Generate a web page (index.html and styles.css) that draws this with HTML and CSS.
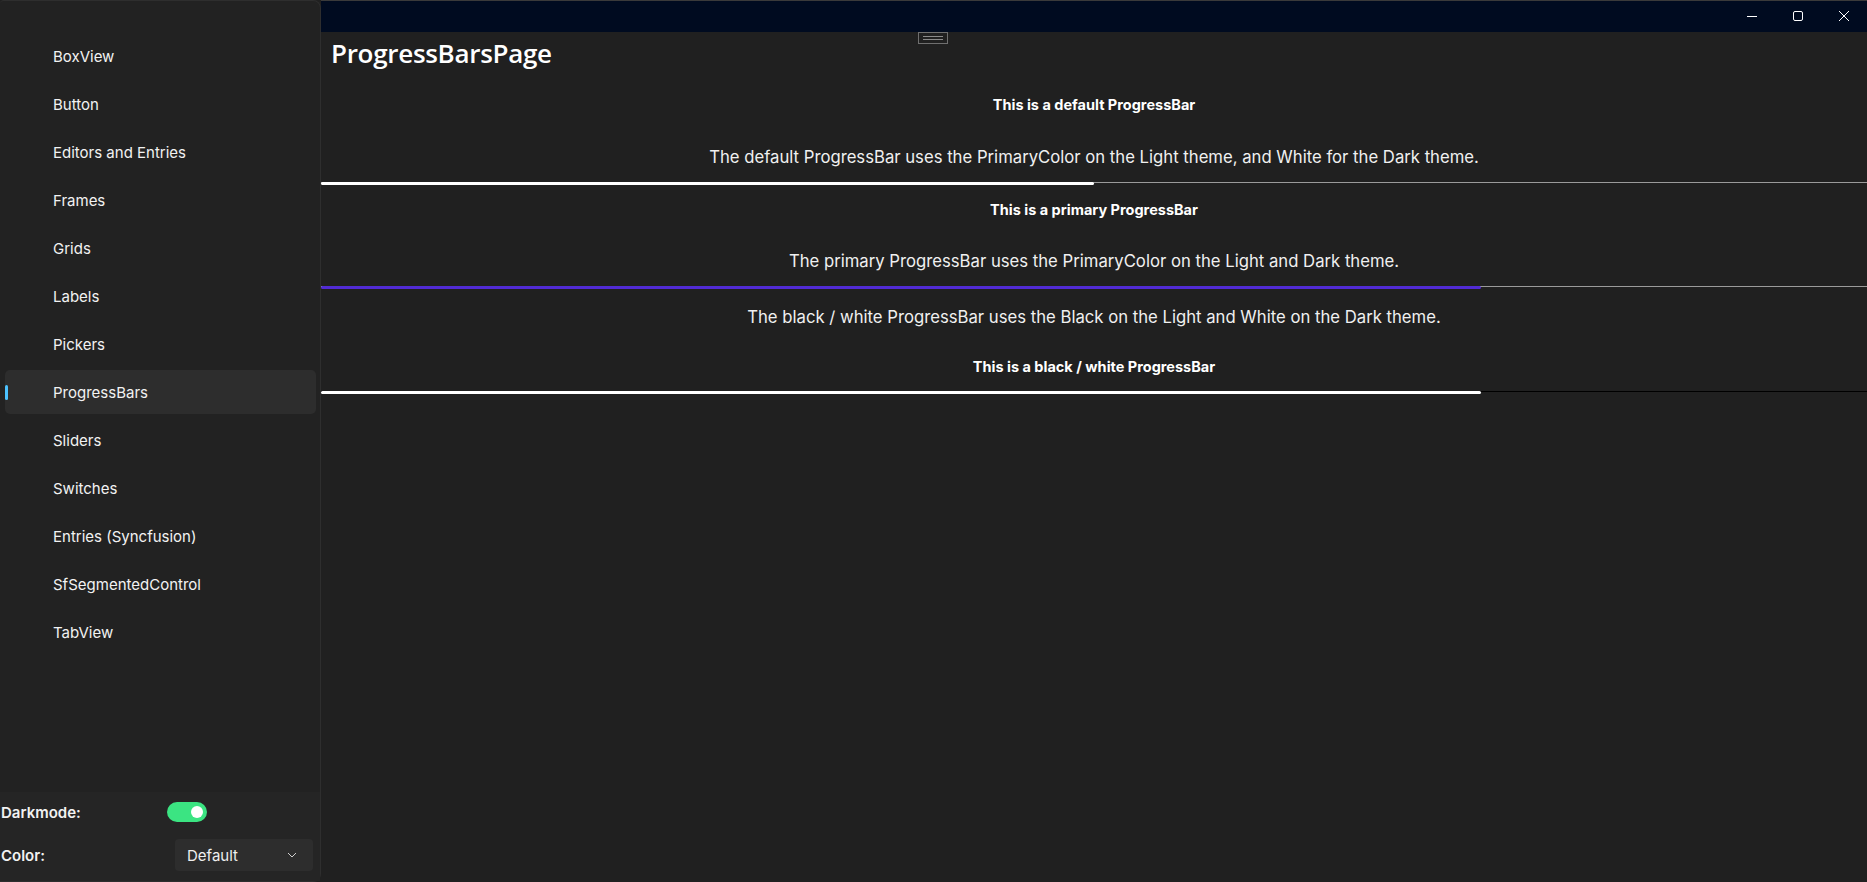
FILE: index.html
```html
<!DOCTYPE html>
<html lang="en">
<head>
<meta charset="utf-8">
<title>ProgressBarsPage</title>
<link rel="stylesheet" href="styles.css">
</head>
<body>
<div class="window">
  <aside class="flyout">
    <nav class="nav">
      <div class="nav-item">BoxView</div>
      <div class="nav-item">Button</div>
      <div class="nav-item">Editors and Entries</div>
      <div class="nav-item">Frames</div>
      <div class="nav-item">Grids</div>
      <div class="nav-item">Labels</div>
      <div class="nav-item">Pickers</div>
      <div class="nav-item selected">ProgressBars</div>
      <div class="nav-item">Sliders</div>
      <div class="nav-item">Switches</div>
      <div class="nav-item">Entries (Syncfusion)</div>
      <div class="nav-item">SfSegmentedControl</div>
      <div class="nav-item">TabView</div>
    </nav>
    <div class="settings">
      <div class="setting-row row-dark">
        <span class="setting-label">Darkmode:</span>
        <span class="toggle"><span class="knob"></span></span>
      </div>
      <div class="setting-row row-color">
        <span class="setting-label">Color:</span>
        <span class="dropdown">Default
          <svg class="chev" width="10" height="6" viewBox="0 0 10 6"><path d="M1 1 L5 5 L9 1" fill="none" stroke="#cfcfcf" stroke-width="1"/></svg>
        </span>
      </div>
    </div>
  </aside>
  <main class="main">
    <header class="titlebar">
      <div class="grip"><span></span><span></span></div>
      <div class="controls">
        <div class="ctl"><svg width="10" height="10" viewBox="0 0 10 10"><path d="M0 5.5 H10" stroke="#fff" stroke-width="1"/></svg></div>
        <div class="ctl"><svg width="10" height="10" viewBox="0 0 10 10"><rect x="0.5" y="0.5" width="9" height="9" rx="1.5" fill="none" stroke="#fff" stroke-width="1"/></svg></div>
        <div class="ctl"><svg width="10" height="10" viewBox="0 0 10 10"><path d="M0 0 L10 10 M10 0 L0 10" stroke="#fff" stroke-width="1"/></svg></div>
      </div>
    </header>
    <section class="content">
      <h1 class="page-title">ProgressBarsPage</h1>
      <p class="label-bold l1">This is a default ProgressBar</p>
      <p class="label d1">The default ProgressBar uses the PrimaryColor on the Light theme, and White for the Dark theme.</p>
      <div class="bar bar-default"><div class="fill" style="width:50%"></div></div>
      <p class="label-bold l2">This is a primary ProgressBar</p>
      <p class="label d2">The primary ProgressBar uses the PrimaryColor on the Light and Dark theme.</p>
      <div class="bar bar-primary"><div class="fill" style="width:75%"></div></div>
      <p class="label d3">The black / white ProgressBar uses the Black on the Light and White on the Dark theme.</p>
      <p class="label-bold l3">This is a black / white ProgressBar</p>
      <div class="bar bar-bw"><div class="fill" style="width:75%"></div></div>
    </section>
  </main>
</div>
</body>
</html>
```
FILE: styles.css
```css
* { box-sizing: border-box; }
html, body { margin: 0; padding: 0; }
body {
  width: 1867px;
  height: 882px;
  overflow: hidden;
  background: #202020;
  color: #ffffff;
  font-family: "Inter", "Noto Sans", sans-serif;
}
.window {
  display: flex;
  width: 1867px;
  height: 882px;
}
.flyout {
  width: 321px;
  flex: none;
  height: 882px;
  background: #222222;
  border: 1px solid #2e2e2e;
  border-left: none;
  border-radius: 4px 8px 8px 0;
  display: flex;
  flex-direction: column;
}
.nav {
  padding-top: 33px;
  flex: 1;
  display: flex;
  flex-direction: column;
  gap: 4px;
}
.nav-item {
  position: relative;
  height: 44px;
  margin-left: 5px;
  width: 311px;
  padding-left: 48px;
  display: flex;
  align-items: center;
  font-size: 15px;
  color: #f2f2f2;
  border-radius: 5px;
}
.nav-item.selected {
  background: #2d2d2d;
}
.nav-item.selected::before {
  content: "";
  position: absolute;
  left: 0;
  top: 15px;
  width: 3px;
  height: 15px;
  border-radius: 2px;
  background: #4cc2ff;
}
.settings {
  height: 89px;
  background: #252525;
  display: flex;
  flex-direction: column;
}
.setting-row {
  display: flex;
  align-items: center;
  padding-left: 1px;
}
.row-dark { height: 40px; }
.row-color { height: 46px; }
.setting-label {
  width: 166px;
  font-size: 15px;
  font-weight: 600;
  color: #f2f2f2;
}
.toggle {
  width: 40px;
  height: 20px;
  border-radius: 10px;
  background: #3be482;
  position: relative;
}
.knob {
  position: absolute;
  right: 4px;
  top: 4px;
  width: 12px;
  height: 12px;
  border-radius: 50%;
  background: #ffffff;
}
.row-color .setting-label { width: 174px; }
.dropdown {
  width: 138px;
  height: 32px;
  border-radius: 4px;
  background: #2d2d2d;
  display: flex;
  align-items: center;
  justify-content: space-between;
  padding: 0 16px 0 12px;
  font-size: 15px;
  color: #efefef;
}
.main {
  flex: 1;
  display: flex;
  flex-direction: column;
  min-width: 0;
}
.titlebar {
  height: 32px;
  background: #000b20;
  display: flex;
  justify-content: flex-end;
  position: relative;
  box-shadow: inset 0 1px 0 #3a3a3a;
}
.grip {
  position: absolute;
  left: 597px;
  top: 32px;
  width: 30px;
  height: 12px;
  border: 1px solid #6f6f6f;
  display: flex;
  flex-direction: column;
  justify-content: center;
  gap: 2px;
  padding: 0 4px;
}
.grip span {
  height: 1px;
  background: #8a8a8a;
}
.controls { display: flex; }
.ctl {
  width: 46px;
  height: 32px;
  display: flex;
  align-items: center;
  justify-content: center;
}
.content {
  flex: 1;
  display: flex;
  flex-direction: column;
}
.page-title {
  margin: 0;
  padding: 4px 0 0 10px;
  font-family: "Open Sans", "Noto Sans", sans-serif;
  font-weight: 600;
  font-size: 26px;
  line-height: 34px;
  letter-spacing: -0.3px;
  color: #ffffff;
}
.label-bold, .label {
  margin: 0;
  text-align: center;
  color: #ffffff;
}
.label-bold {
  font-size: 14.5px;
  font-weight: 700;
  line-height: 20px;
}
.label {
  font-size: 16.7px;
  line-height: 22px;
  color: #f0f0f0;
}
.l1 { margin-top: 25px; }
.d1 { margin-top: 31px; }
.bar {
  position: relative;
  height: 4px;
  display: flex;
  align-items: center;
  margin-top: 13px;
}
.bar::before {
  content: "";
  position: absolute;
  left: 0; right: 0;
  top: 1px;
  height: 1px;
  background: #9a9a9a;
}
.bar .fill {
  position: relative;
  height: 3px;
  border-radius: 2px;
  background: #ffffff;
}
.bar-primary .fill { background: #512bd4; }
.bar-bw::before { background: #000000; }
.l2 { margin-top: 15px; }
.d2 { margin-top: 30px; }
.d3 { margin-top: 17px; }
.l3 { margin-top: 29px; }
```
